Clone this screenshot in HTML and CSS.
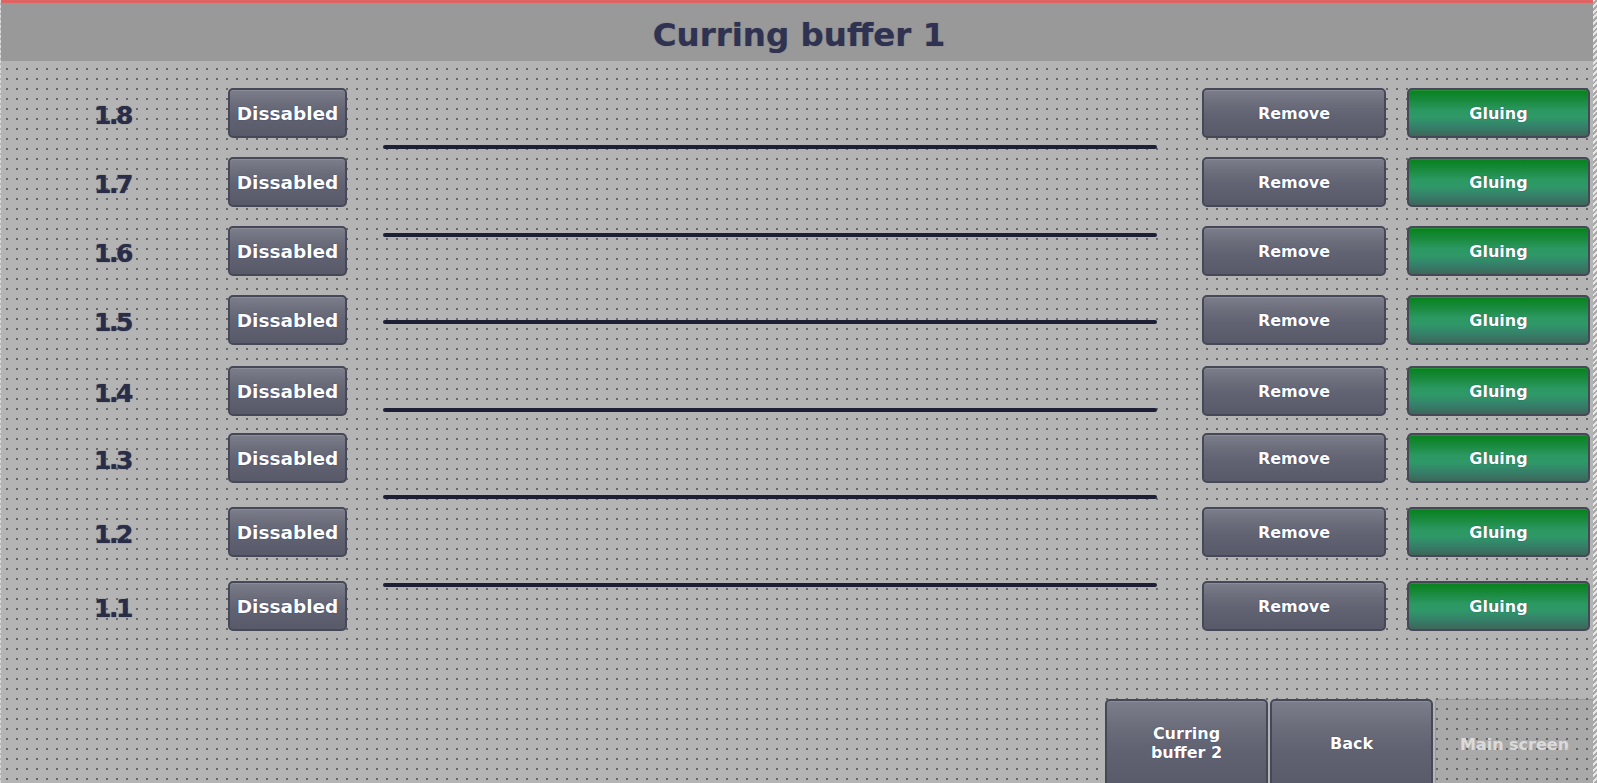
FILE: index.html
```html
<!DOCTYPE html>
<html lang="en">
<head>
<meta charset="utf-8">
<title>Curring buffer 1</title>
<link rel="stylesheet" href="styles.css">
</head>
<body>
<div class="screen">
  <header class="title-bar">
    <h1 class="title">Curring buffer 1</h1>
  </header>

  <main class="board">
    <div class="col-left">
      <div class="row"><span class="num">1.8</span><button class="btn btn-dis">Dissabled</button></div>
      <div class="row"><span class="num">1.7</span><button class="btn btn-dis">Dissabled</button></div>
      <div class="row"><span class="num">1.6</span><button class="btn btn-dis">Dissabled</button></div>
      <div class="row"><span class="num">1.5</span><button class="btn btn-dis">Dissabled</button></div>
      <div class="row loose"><span class="num">1.4</span><button class="btn btn-dis">Dissabled</button></div>
      <div class="row tight"><span class="num">1.3</span><button class="btn btn-dis">Dissabled</button></div>
      <div class="row wide"><span class="num">1.2</span><button class="btn btn-dis">Dissabled</button></div>
      <div class="row wide"><span class="num">1.1</span><button class="btn btn-dis">Dissabled</button></div>
    </div>

    <div class="col-mid">
      <div class="rail"></div>
      <div class="rail"></div>
      <div class="rail"></div>
      <div class="rail"></div>
      <div class="rail"></div>
      <div class="rail"></div>
    </div>

    <div class="col-right">
      <div class="row"><button class="btn btn-remove">Remove</button><button class="btn btn-glue">Gluing</button></div>
      <div class="row"><button class="btn btn-remove">Remove</button><button class="btn btn-glue">Gluing</button></div>
      <div class="row"><button class="btn btn-remove">Remove</button><button class="btn btn-glue">Gluing</button></div>
      <div class="row"><button class="btn btn-remove">Remove</button><button class="btn btn-glue">Gluing</button></div>
      <div class="row loose"><button class="btn btn-remove">Remove</button><button class="btn btn-glue">Gluing</button></div>
      <div class="row tight"><button class="btn btn-remove">Remove</button><button class="btn btn-glue">Gluing</button></div>
      <div class="row wide"><button class="btn btn-remove">Remove</button><button class="btn btn-glue">Gluing</button></div>
      <div class="row wide"><button class="btn btn-remove">Remove</button><button class="btn btn-glue">Gluing</button></div>
    </div>
  </main>

  <nav class="nav">
    <button class="btn nav-btn">Curring<br>buffer 2</button>
    <button class="btn nav-btn">Back</button>
    <button class="nav-btn nav-ghost">Main screen</button>
  </nav>

  <div class="edge-hatch"></div>
</div>
</body>
</html>
```

FILE: styles.css
```css
html, body {
  margin: 0;
  padding: 0;
}

body {
  width: 1597px;
  height: 783px;
  overflow: hidden;
  background-color: #b4b4b4;
  background-image:
    linear-gradient(to bottom, transparent 2px, #b4b4b4 2px),
    linear-gradient(to right, #666666 2px, #b4b4b4 2px);
  background-size: 10px 10px;
  background-position: 6px 68px;
  font-family: "DejaVu Sans", Verdana, sans-serif;
}

.screen {
  position: relative;
  display: flex;
  flex-direction: column;
  height: 783px;
  border-left: 1px dashed #d8d8d8;
  box-sizing: border-box;
}

.title-bar {
  height: 58px;
  border-top: 3px solid #e06464;
  background: #999999;
  display: flex;
  align-items: center;
  justify-content: center;
  flex: none;
}

.title {
  margin: 0;
  font-size: 32.5px;
  font-weight: bold;
  color: #2f3250;
  text-shadow: 0 0 1px rgba(47, 50, 80, 0.5);
  padding-top: 5px;
}

.board {
  height: 638px;
  flex: none;
  display: flex;
  align-items: flex-start;
}

.col-left {
  display: flex;
  flex-direction: column;
  padding-top: 27px;
  padding-left: 93px;
}

.col-right {
  display: flex;
  flex-direction: column;
  padding-top: 27px;
  margin-left: 45px;
}

.row {
  display: flex;
  align-items: center;
  height: 50px;
  margin-top: 19px;
}

.row:first-child { margin-top: 0; }
.row.loose { margin-top: 21px; }
.row.tight { margin-top: 17px; }
.row.wide { margin-top: 24px; }

.num {
  width: 134px;
  font-size: 25px;
  font-weight: bold;
  letter-spacing: -2.5px;
  color: #2a2d48;
  padding-top: 5px;
  text-shadow: 0 0 1px rgba(30, 34, 60, 0.8);
}

.col-mid {
  margin-left: 36px;
  width: 774px;
  padding-top: 84px;
  display: flex;
  flex-direction: column;
  gap: 83.6px;
}

.rail {
  height: 4px;
  border-radius: 2px;
  background: #1d2034;
}

.btn {
  box-sizing: border-box;
  border: 2px solid #464857;
  border-radius: 5px;
  background: linear-gradient(#7d7e8b 0%, #6c6d7b 30%, #616372 55%, #585a69 100%);
  box-shadow: inset 0 1px 0 rgba(255, 255, 255, 0.12);
  color: #ffffff;
  font-family: "DejaVu Sans", Verdana, sans-serif;
  font-weight: bold;
  text-shadow: 0 0 1px rgba(25, 35, 100, 0.9);
  padding: 0;
  cursor: pointer;
}

.btn-dis {
  width: 119px;
  height: 50px;
  font-size: 18.5px;
}

.btn-remove {
  width: 184px;
  height: 50px;
  font-size: 16px;
}

.btn-glue {
  width: 183px;
  height: 50px;
  font-size: 16px;
  margin-left: 21px;
  background: linear-gradient(#06821b 0%, #17893a 20%, #2c9862 45%, #2f9868 60%, #35806a 80%, #3e6659 100%);
}

.nav {
  flex: none;
  display: flex;
  justify-content: flex-end;
  gap: 2px;
  padding-right: 3px;
  height: 90px;
}

.nav-btn {
  width: 163px;
  height: 90px;
  font-size: 16px;
  line-height: 19px;
  padding-bottom: 2px;
}

.nav-ghost {
  width: 159px;
  box-sizing: border-box;
  border: 1px solid rgba(120, 120, 130, 0.35);
  border-radius: 3px;
  background: rgba(80, 80, 90, 0.1);
  color: rgba(228, 228, 228, 0.85);
  font-family: "DejaVu Sans", Verdana, sans-serif;
  font-weight: bold;
  padding: 0;
}

.edge-hatch {
  position: absolute;
  top: 0;
  right: 0;
  width: 4px;
  height: 783px;
  background: repeating-linear-gradient(135deg, #e6e6e6 0 2px, #a8a8a8 2px 4px);
}
```
